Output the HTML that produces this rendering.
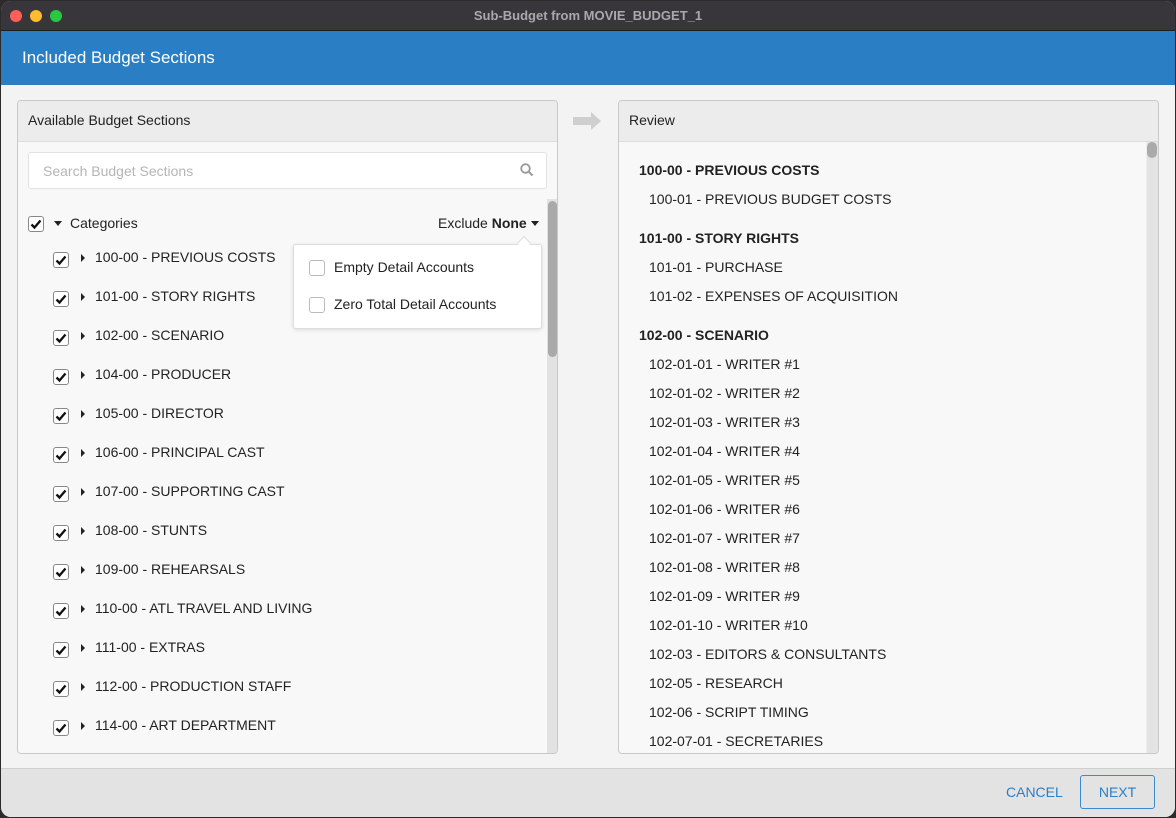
<!DOCTYPE html>
<html><head><meta charset="utf-8"><style>
*{box-sizing:border-box;margin:0;padding:0}
body{width:1176px;height:818px;overflow:hidden;background:#2b2b2b;font-family:"Liberation Sans",sans-serif;font-size:14px;color:#222;position:relative}
.win{position:absolute;left:1px;top:1px;width:1174px;height:816px;border-radius:10px;overflow:hidden;background:#f3f3f3}
.title{position:absolute;left:0;top:0;width:100%;height:30px;background:#38363a;border-bottom:1px solid #1e1e1e;color:#a9a9ab;font-weight:bold;font-size:13px;text-align:center;line-height:30px}
.dot{position:absolute;top:9px;width:12px;height:12px;border-radius:50%}
.hdr{position:absolute;left:0;top:30px;width:100%;height:54px;background:#2a7fc4;color:#fff;font-size:17px;line-height:53px;padding-left:21px}
.panel{position:absolute;top:99px;width:541px;height:654px;border:1px solid #c9c9c9;border-radius:4px;background:#f8f8f8;overflow:hidden}
.ph{height:41px;background:#ececec;border-bottom:1px solid #dcdcdc;line-height:38px;padding-left:10px;font-size:14px}
.a{position:absolute;white-space:nowrap}
.cb{position:absolute;width:16px;height:16px;border:1px solid #888;border-radius:3px;background:#fff}
.cb svg{position:absolute;left:1px;top:1px}
.tri{position:absolute;width:0;height:0;border-top:4px solid transparent;border-bottom:4px solid transparent;border-left:4px solid #222}
</style></head><body>
<div class="win">
<div class="title">Sub-Budget from MOVIE_BUDGET_1
<div class="dot" style="left:9px;background:#fe5f57"></div>
<div class="dot" style="left:29px;background:#febc2e"></div>
<div class="dot" style="left:49px;background:#28c840"></div></div>
<div class="hdr">Included Budget Sections</div>

<div class="panel" style="left:16px">
<div class="ph">Available Budget Sections</div>
<div class="a" style="left:10px;top:51px;width:519px;height:37px;background:#fff;border:1px solid #e2e2e2;border-radius:3px"></div>
<div class="a" style="left:25px;top:62px;color:#b5b5b5;font-size:14px">Search Budget Sections</div>
<svg class="a" style="left:502px;top:62px" width="14" height="14" viewBox="0 0 14 14"><circle cx="5.5" cy="5.5" r="4.3" fill="none" stroke="#999" stroke-width="1.8"/><line x1="8.6" y1="8.6" x2="12.5" y2="12.5" stroke="#999" stroke-width="2"/></svg>
<div class="a" style="left:0;top:98px;width:530px;height:556px;background:#f8f8f8"></div>
<div class="a" style="left:529px;top:98px;width:11px;height:556px;background:#e2e2e2"></div>
<div class="a" style="left:530px;top:100px;width:9px;height:156px;background:#a9a9a9;border-radius:5px"></div>
<div id="rows"></div>
<div class="a" style="left:420px;top:114px">Exclude <b>None</b></div>
<div class="a" style="left:513px;top:120px;border-left:4px solid transparent;border-right:4px solid transparent;border-top:5px solid #222"></div>
<div class="a" style="left:275px;top:143px;width:249px;height:85px;background:#fff;border:1px solid #ddd;border-radius:3px;box-shadow:0 1px 4px rgba(0,0,0,.12)"></div>
<div class="a" style="left:501px;top:137px;width:10px;height:10px;background:#fff;border-left:1px solid #ddd;border-top:1px solid #ddd;transform:rotate(45deg)"></div>
<div class="cb" style="left:291px;top:159px;border-color:#bbb"></div>
<div class="a" style="left:316px;top:158px">Empty Detail Accounts</div>
<div class="cb" style="left:291px;top:196px;border-color:#bbb"></div>
<div class="a" style="left:316px;top:195px">Zero Total Detail Accounts</div>
</div>

<svg class="a" style="left:571px;top:111px" width="30" height="20" viewBox="0 0 30 20"><path d="M1 5H19V0L29 9 19 18V13H1Z" fill="#cfcfcf"/></svg>

<div class="panel" style="left:617px">
<div class="ph">Review</div>
<div id="rv"></div>
<div class="a" style="left:527px;top:41px;width:12px;height:613px;background:#e3e3e3;border-left:1px solid #eee"></div>
<div class="a" style="left:528px;top:41px;width:10px;height:16px;background:#aaa;border-radius:5px"></div>
</div>

<div class="a" style="left:0;top:767px;width:100%;height:49px;background:#e3e3e3;border-top:1px solid #cfcfcf"></div>
<div class="a" style="left:1005px;top:783px;color:#2a80c8;font-size:14px">CANCEL</div>
<div class="a" style="left:1079px;top:774px;width:75px;height:34px;border:1px solid #3a8ad0;border-radius:3px;color:#2a80c8;text-align:center;line-height:32px">NEXT</div>
</div>
<script>
var ck='<svg width="12" height="12" viewBox="0 0 12 12"><path d="M1.5 6.5L4.5 9.5 10.5 2.5" fill="none" stroke="#111" stroke-width="2.3"/></svg>';
var h='';
h+='<div class="cb" style="left:10px;top:115px">'+ck+'</div><div class="a" style="left:36px;top:120px;border-left:4px solid transparent;border-right:4px solid transparent;border-top:5px solid #222"></div><div class="a" style="left:52px;top:114px">Categories</div>';
var it=["100-00 - PREVIOUS COSTS","101-00 - STORY RIGHTS","102-00 - SCENARIO","104-00 - PRODUCER","105-00 - DIRECTOR","106-00 - PRINCIPAL CAST","107-00 - SUPPORTING CAST","108-00 - STUNTS","109-00 - REHEARSALS","110-00 - ATL TRAVEL AND LIVING","111-00 - EXTRAS","112-00 - PRODUCTION STAFF","114-00 - ART DEPARTMENT"];
it.forEach(function(t,i){var y=148+39*i;h+='<div class="cb" style="left:35px;top:'+(y+3)+'px">'+ck+'</div><div class="tri" style="left:63px;top:'+(y+5)+'px"></div><div class="a" style="left:77px;top:'+y+'px">'+t+'</div>';});
document.getElementById('rows').innerHTML=h;
var r=[[1,"100-00 - PREVIOUS COSTS"],[0,"100-01 - PREVIOUS BUDGET COSTS"],[1,"101-00 - STORY RIGHTS"],[0,"101-01 - PURCHASE"],[0,"101-02 - EXPENSES OF ACQUISITION"],[1,"102-00 - SCENARIO"]];
for(var i=1;i<=10;i++)r.push([0,"102-01-"+(i<10?"0":"")+i+" - WRITER #"+i]);
r.push([0,"102-03 - EDITORS &amp; CONSULTANTS"],[0,"102-05 - RESEARCH"],[0,"102-06 - SCRIPT TIMING"],[0,"102-07-01 - SECRETARIES"]);
var y=61,s='';r.forEach(function(e,i){if(e[0]&&i>0)y+=10;s+='<div class="a" style="left:'+(e[0]?20:30)+'px;top:'+y+'px;'+(e[0]?'font-weight:bold':'')+'">'+e[1]+'</div>';y+=29;});
document.getElementById('rv').innerHTML=s;
</script>
</body></html>
